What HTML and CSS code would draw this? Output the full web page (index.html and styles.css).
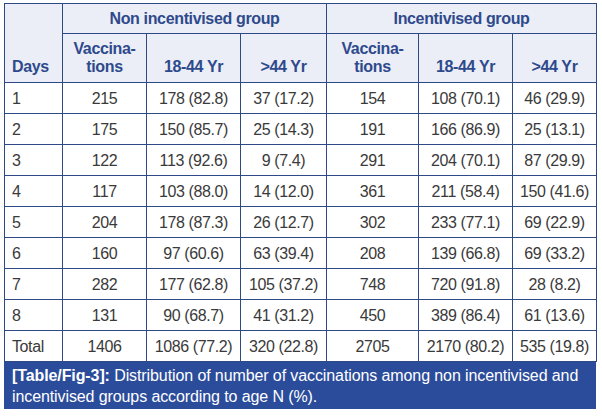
FILE: index.html
```html
<!DOCTYPE html>
<html>
<head>
<meta charset="utf-8">
<link rel="stylesheet" href="styles.css">
</head>
<body>
<div class="wrap">
<table class="tbl">
  <colgroup>
    <col class="c-days"><col class="c-v1"><col class="c-a1"><col class="c-b1"><col class="c-v2"><col class="c-a2"><col class="c-b2">
  </colgroup>
  <thead>
    <tr class="h1">
      <th rowspan="2" class="days">Days</th>
      <th colspan="3">Non incentivised group</th>
      <th colspan="3">Incentivised group</th>
    </tr>
    <tr class="h2">
      <th>Vaccina-<br>tions</th>
      <th>18-44 Yr</th>
      <th>&gt;44 Yr</th>
      <th>Vaccina-<br>tions</th>
      <th>18-44 Yr</th>
      <th>&gt;44 Yr</th>
    </tr>
  </thead>
  <tbody>
    <tr><td class="d">1</td><td>215</td><td>178 (82.8)</td><td>37 (17.2)</td><td>154</td><td>108 (70.1)</td><td>46 (29.9)</td></tr>
    <tr><td class="d">2</td><td>175</td><td>150 (85.7)</td><td>25 (14.3)</td><td>191</td><td>166 (86.9)</td><td>25 (13.1)</td></tr>
    <tr><td class="d">3</td><td>122</td><td>113 (92.6)</td><td>9 (7.4)</td><td>291</td><td>204 (70.1)</td><td>87 (29.9)</td></tr>
    <tr><td class="d">4</td><td>117</td><td>103 (88.0)</td><td>14 (12.0)</td><td>361</td><td>211 (58.4)</td><td>150 (41.6)</td></tr>
    <tr><td class="d">5</td><td>204</td><td>178 (87.3)</td><td>26 (12.7)</td><td>302</td><td>233 (77.1)</td><td>69 (22.9)</td></tr>
    <tr><td class="d">6</td><td>160</td><td>97 (60.6)</td><td>63 (39.4)</td><td>208</td><td>139 (66.8)</td><td>69 (33.2)</td></tr>
    <tr><td class="d">7</td><td>282</td><td>177 (62.8)</td><td>105 (37.2)</td><td>748</td><td>720 (91.8)</td><td>28 (8.2)</td></tr>
    <tr><td class="d">8</td><td>131</td><td>90 (68.7)</td><td>41 (31.2)</td><td>450</td><td>389 (86.4)</td><td>61 (13.6)</td></tr>
    <tr><td class="d">Total</td><td>1406</td><td>1086 (77.2)</td><td>320 (22.8)</td><td>2705</td><td>2170 (80.2)</td><td>535 (19.8)</td></tr>
  </tbody>
</table>
<div class="caption"><b>[Table/Fig-3]:</b> Distribution of number of vaccinations among non incentivised and incentivised groups according to age N (%).</div>
</div>
</body>
</html>
```

FILE: styles.css
```css
html, body {
  margin: 0;
  padding: 0;
  background: #ffffff;
}
body {
  font-family: "Liberation Sans", Arial, sans-serif;
}
.wrap {
  padding: 3px 6px 0 4px;
  width: 592px;
}
.tbl {
  width: 592px;
  border-collapse: collapse;
  table-layout: fixed;
}
.c-days { width: 58px; }
.c-v1 { width: 84px; }
.c-a1 { width: 94px; }
.c-b1 { width: 86px; }
.c-v2 { width: 92px; }
.c-a2 { width: 94px; }
.c-b2 { width: 84px; }
.tbl th, .tbl td {
  border: 1px solid #2d4a86;
  padding: 0;
}
.tbl th {
  background: #eceef7;
  color: #2e4a8c;
  font-weight: bold;
  font-size: 16px;
  line-height: 18px;
  letter-spacing: -0.35px;
  text-align: center;
}
.h1 th {
  height: 29px;
  vertical-align: middle;
}
.h2 th {
  height: 42px;
  vertical-align: bottom;
  padding-bottom: 6px;
}
.tbl th.days {
  vertical-align: bottom;
  text-align: left;
  padding-left: 7px;
  padding-bottom: 6px;
}
.tbl td {
  height: 29px;
  font-size: 16px;
  line-height: 18px;
  color: #3a3a3a;
  text-align: center;
  vertical-align: middle;
  letter-spacing: -0.4px;
  padding-top: 1px;
}
.tbl td.d {
  text-align: left;
  padding-left: 7px;
}
.caption {
  background: #2b4c9b;
  color: #ffffff;
  font-size: 16px;
  line-height: 21px;
  padding: 3px 8px 2px 8px;
  letter-spacing: -0.1px;
}
.caption b {
  font-weight: bold;
}
```
